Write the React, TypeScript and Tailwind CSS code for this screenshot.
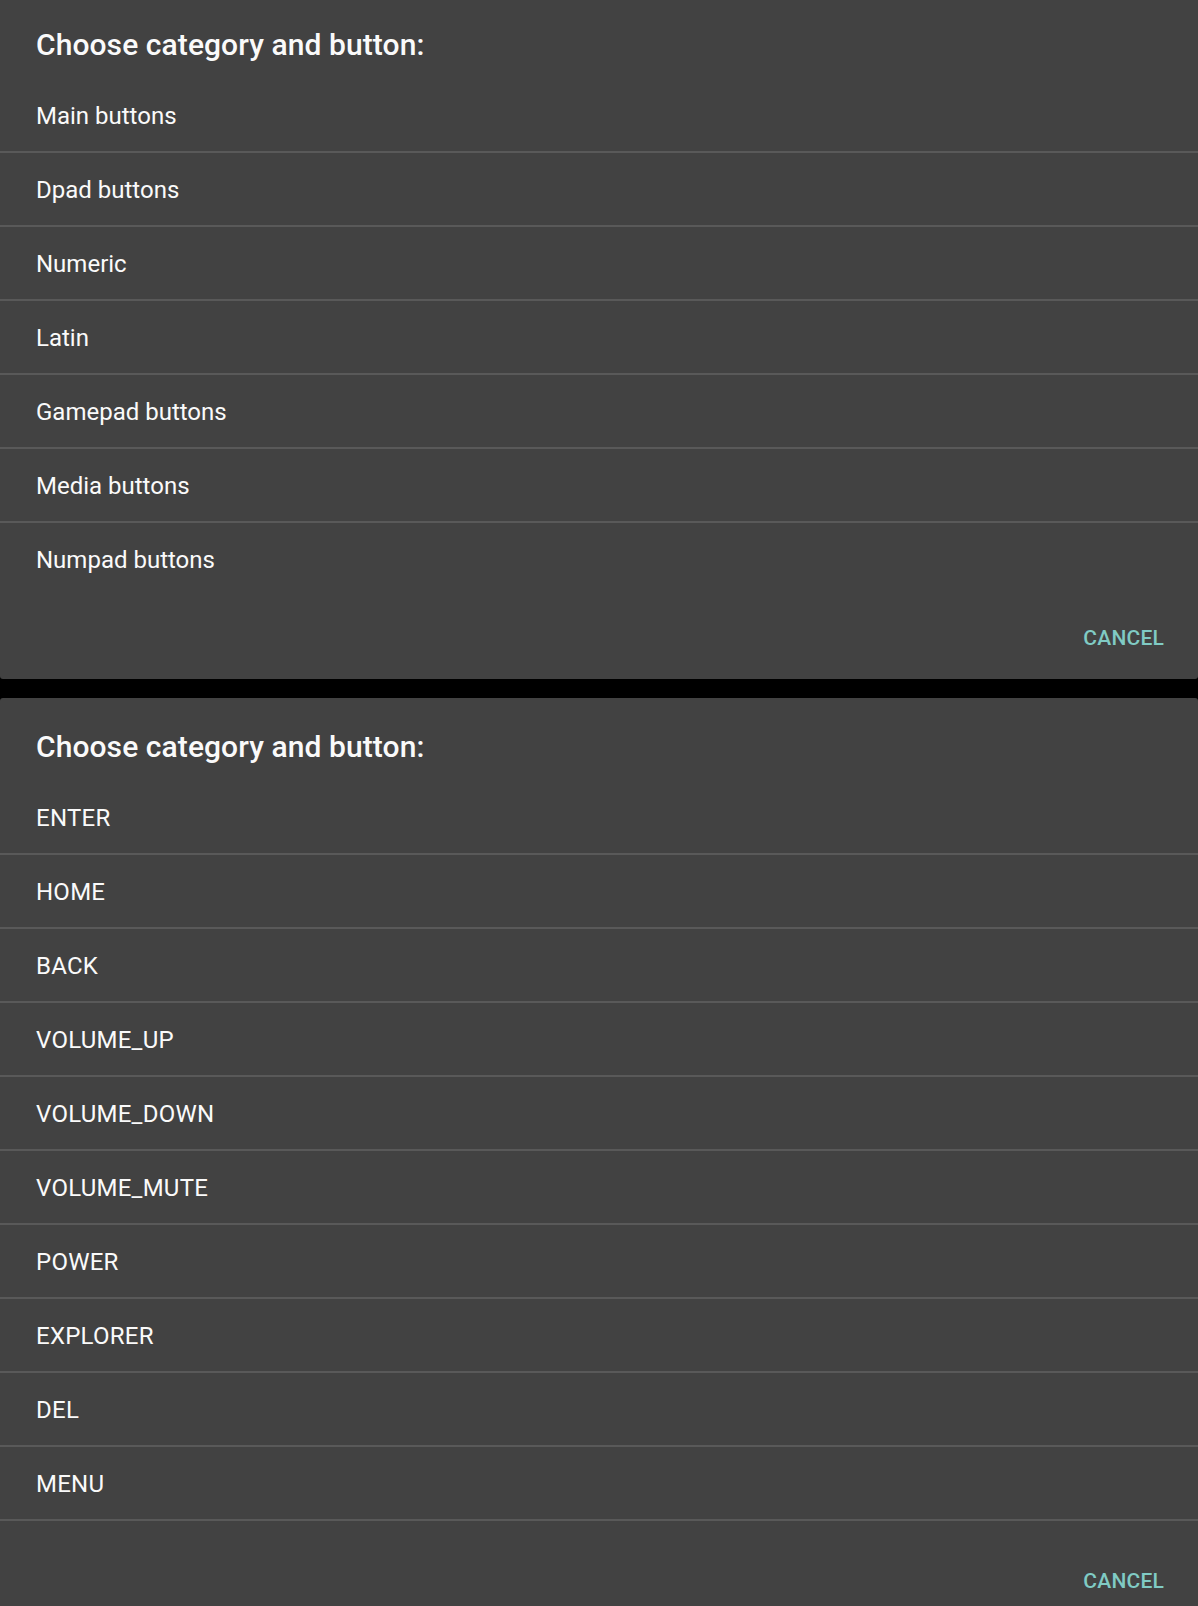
import React from 'react';

const categories = [
  'Main buttons',
  'Dpad buttons',
  'Numeric',
  'Latin',
  'Gamepad buttons',
  'Media buttons',
  'Numpad buttons',
];

const keys = [
  'ENTER',
  'HOME',
  'BACK',
  'VOLUME_UP',
  'VOLUME_DOWN',
  'VOLUME_MUTE',
  'POWER',
  'EXPLORER',
  'DEL',
  'MENU',
];

const font = { fontFamily: 'Roboto, "Noto Sans", sans-serif' };

const Row = ({ label, divider, caps }: { label: string; divider: boolean; caps: boolean }) => (
  <div className={divider ? 'border-b-2 border-[#595959]' : ''}>
    <div
      className={`h-[72px] px-[36px] pt-[2px] flex items-center text-[24px] leading-[28px] text-[#fafafa] ${
        caps ? 'tracking-[0.25px]' : 'tracking-normal'
      }`}
    >
      {label}
    </div>
  </div>
);

const Dialog = ({
  items,
  lastDivider,
  caps,
  className,
  footerClass,
}: {
  items: string[];
  lastDivider: boolean;
  caps: boolean;
  className: string;
  footerClass: string;
}) => (
  <div className={`bg-[#424242] ${className}`}>
    <h2 className="px-[36px] text-[30px] leading-[36px] font-medium tracking-[0.08px] text-[#fafafa] mb-[16px]">
      Choose category and button:
    </h2>
    <div>
      {items.map((item, i) => (
        <Row key={item} label={item} caps={caps} divider={i < items.length - 1 || lastDivider} />
      ))}
    </div>
    <div className={`flex justify-end pr-[34px] ${footerClass}`}>
      <button className="text-[21px] leading-[24px] font-medium text-[#80cbc4] tracking-[0.2px]">
        CANCEL
      </button>
    </div>
  </div>
);

export default function App() {
  return (
    <div className="w-[1198px] h-[1606px] overflow-hidden bg-black flex flex-col" style={font}>
      <Dialog
        items={categories}
        lastDivider={false}
        caps={false}
        className="pt-[27px] rounded-b-[3px]"
        footerClass="pt-[31px] pb-[29px]"
      />
      <div className="h-[19px] shrink-0" />
      <Dialog
        items={keys}
        lastDivider={true}
        caps={true}
        className="pt-[31px] rounded-t-[3px] shrink-0"
        footerClass="pt-[48px] pb-[40px]"
      />
    </div>
  );
}
